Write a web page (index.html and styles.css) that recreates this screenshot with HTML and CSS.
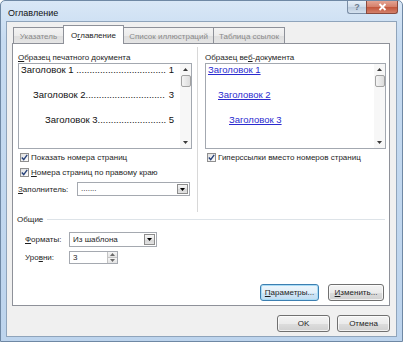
FILE: index.html
```html
<!DOCTYPE html>
<html lang="ru">
<head>
    <meta charset="UTF-8">
    <meta name="viewport" content="width=device-width, initial-scale=1.0">
    <title>Оглавление</title>
    <link rel="stylesheet" href="styles.css">
</head>
<body>
    <div class="window">
        <!-- заголовок окна -->
        <div class="titlebar">
            <span class="title">Оглавление</span>
            <div class="caption">
                <span class="cap-help">?</span>
                <span class="cap-close">
                    <svg width="11" height="8" viewBox="0 0 11 8"><path d="M2.5 1 L8.5 7 M8.5 1 L2.5 7" stroke="#fff" stroke-width="1.8"/></svg>
                </span>
            </div>
        </div>

        <div class="client">
            <!-- вкладки -->
            <div class="tabs">
                <span class="tab tab-index">Указатель</span>
                <span class="tab tab-toc active">О<u>г</u>лавление</span>
                <span class="tab tab-figures">Список иллюстраций</span>
                <span class="tab tab-refs">Таблица ссылок</span>
            </div>

            <div class="panel">
                <div class="columns">
                    <!-- печатный документ -->
                    <div class="col col-left">
                        <div class="caption-label"><u>О</u>бразец печатного документа</div>
                        <div class="preview preview-print">
                            <div class="preview-body">
                                <div class="entry lvl1"><span class="name">Заголовок 1 ..................................</span><span class="num">1</span></div>
                                <div class="entry lvl2"><span class="name">Заголовок 2..............................</span><span class="num">3</span></div>
                                <div class="entry lvl3"><span class="name">Заголовок 3..........................</span><span class="num">5</span></div>
                            </div>
                            <div class="sb">
                                <span class="sb-btn"><svg width="5" height="3" viewBox="0 0 5 3"><path d="M0 3 L2.5 0 L5 3 Z" fill="#3a3a3a"/></svg></span>
                                <span class="sb-thumb"></span>
                                <span class="sb-space"></span>
                                <span class="sb-btn"><svg width="5" height="3" viewBox="0 0 5 3"><path d="M0 0 L5 0 L2.5 3 Z" fill="#3a3a3a"/></svg></span>
                            </div>
                        </div>
                        <label class="check-row first">
                            <span class="box"><svg width="7" height="7" viewBox="0 0 7 7"><path d="M0.8 3.6 L2.7 5.6 L6.2 0.9" fill="none" stroke="#27427a" stroke-width="1.4"/></svg></span>
                            <span>Показать номера страниц</span>
                        </label>
                        <label class="check-row">
                            <span class="box"><svg width="7" height="7" viewBox="0 0 7 7"><path d="M0.8 3.6 L2.7 5.6 L6.2 0.9" fill="none" stroke="#27427a" stroke-width="1.4"/></svg></span>
                            <span><u>Н</u>омера страниц по правому краю</span>
                        </label>
                        <div class="fill-row">
                            <span class="fill-label"><u>З</u>аполнитель:</span>
                            <div class="dropdown dd-fill">
                                <span class="dd-text">.......</span>
                                <span class="dd-btn"><svg width="5" height="3" viewBox="0 0 5 3"><path d="M0 0 L5 0 L2.5 3 Z" fill="#000"/></svg></span>
                            </div>
                        </div>
                    </div>

                    <div class="vrule"></div>

                    <!-- веб-документ -->
                    <div class="col col-right">
                        <div class="caption-label">Образец ве<u>б</u>-документа</div>
                        <div class="preview preview-web">
                            <div class="preview-body">
                                <div class="entry web1"><a href="#">Заголовок 1</a></div>
                                <div class="entry web2"><a href="#">Заголовок 2</a></div>
                                <div class="entry web3"><a href="#">Заголовок 3</a></div>
                            </div>
                            <div class="sb">
                                <span class="sb-btn"><svg width="5" height="3" viewBox="0 0 5 3"><path d="M0 3 L2.5 0 L5 3 Z" fill="#3a3a3a"/></svg></span>
                                <span class="sb-thumb"></span>
                                <span class="sb-space"></span>
                                <span class="sb-btn"><svg width="5" height="3" viewBox="0 0 5 3"><path d="M0 0 L5 0 L2.5 3 Z" fill="#3a3a3a"/></svg></span>
                            </div>
                        </div>
                        <label class="check-row first">
                            <span class="box"><svg width="7" height="7" viewBox="0 0 7 7"><path d="M0.8 3.6 L2.7 5.6 L6.2 0.9" fill="none" stroke="#27427a" stroke-width="1.4"/></svg></span>
                            <span>Гиперссылки вместо номеров страниц</span>
                        </label>
                    </div>
                </div>

                <!-- общие -->
                <div class="group-head">
                    <span>Общие</span>
                    <span class="rule"></span>
                </div>
                <div class="field-row formats">
                    <span class="field-label"><u>Ф</u>орматы:</span>
                    <div class="dropdown dd-formats">
                        <span class="dd-text">Из шаблона</span>
                        <span class="dd-btn"><svg width="5" height="3" viewBox="0 0 5 3"><path d="M0 0 L5 0 L2.5 3 Z" fill="#000"/></svg></span>
                    </div>
                </div>
                <div class="field-row levels">
                    <span class="field-label">Уро<u>в</u>ни:</span>
                    <div class="spinner">
                        <span class="dd-text">3</span>
                        <span class="spin-btns">
                            <span class="spin"><svg width="5" height="3" viewBox="0 0 5 3"><path d="M0 3 L2.5 0 L5 3 Z" fill="#6a6a6a"/></svg></span>
                            <span class="spin"><svg width="5" height="3" viewBox="0 0 5 3"><path d="M0 0 L5 0 L2.5 3 Z" fill="#6a6a6a"/></svg></span>
                        </span>
                    </div>
                </div>

                <div class="actions">
                    <button class="btn btn-focus btn-params"><u>П</u>араметры...</button>
                    <button class="btn btn-edit"><u>И</u>зменить...</button>
                </div>
            </div>

            <div class="footer">
                <button class="btn btn-ok">OK</button>
                <button class="btn btn-cancel">Отмена</button>
            </div>
        </div>
    </div>
</body>
</html>
```

FILE: styles.css
```css
* {
    box-sizing: border-box;
}
body {
    margin: 0;
    font-family: "Liberation Sans", Arial, sans-serif;
    font-size: 8px;
    color: #1e1e1e;
    background: #fff;
}
u {
    text-decoration: underline;
    text-underline-offset: 1px;
}

/* окно */
.window {
    width: 403px;
    height: 342px;
    display: flex;
    flex-direction: column;
    padding: 0 5px 4px 5px;
    border: 1px solid #6f88a4;
    border-radius: 5px 5px 0 0;
    background: linear-gradient(#d9e7f6, #c6dbf1 40px, #bdd4ed);
}
.titlebar {
    height: 20px;
    display: flex;
    justify-content: space-between;
    align-items: flex-start;
}
.title {
    padding: 7px 0 0 2px;
    font-size: 9px;
    color: #111;
}
.caption {
    display: flex;
    margin-right: -1px;
}
.cap-help,
.cap-close {
    height: 13px;
    display: flex;
    align-items: center;
    justify-content: center;
    border: 1px solid #7b8ea6;
    border-top: none;
}
.cap-help {
    width: 19px;
    border-radius: 0 0 0 3px;
    border-right: none;
    background: linear-gradient(#e8f0f8, #cfdceb 50%, #bccbdc 51%, #d4e1ef);
    color: #6b7a8c;
    font-size: 9px;
    font-weight: bold;
}
.cap-close {
    width: 32px;
    border-radius: 0 0 3px 0;
    border-color: #8a4a3e;
    background: linear-gradient(#e4a493, #d47e69 50%, #c2553b 51%, #d3806a);
}

.client {
    flex: 1;
    display: flex;
    flex-direction: column;
    padding: 3px 6px 0 5px;
    border: 1px solid #8fa4bb;
    background: #f0f0f0;
}

/* вкладки */
.tabs {
    height: 19px;
    margin-bottom: -1px;
    padding-left: 1px;
    display: flex;
    align-items: flex-end;
}
.tab {
    height: 17px;
    margin-left: -1px;
    display: flex;
    align-items: center;
    justify-content: center;
    border: 1px solid #8e9199;
    border-bottom: none;
    background: linear-gradient(#f3f3f3, #ebebeb 50%, #dedede 51%, #e6e6e6);
    color: #8a8a8a;
}
.tab:first-child {
    margin-left: 0;
}
.tab.active {
    height: 19px;
    position: relative;
    z-index: 1;
    background: #fff;
    color: #1e1e1e;
}
.tab-index { width: 51px; }
.tab-toc { width: 61px; }
.tab-figures { width: 91px; }
.tab-refs { width: 72px; }

.panel {
    height: 263px;
    display: flex;
    flex-direction: column;
    border: 1px solid #8e9199;
    background: #fff;
}
.columns {
    height: 169px;
    display: flex;
}
.col-left {
    width: 184px;
    padding: 8px 0 0 5px;
}
.vrule {
    width: 1px;
    margin: 3px 0 1px;
    background: #d8d8d8;
}
.col-right {
    flex: 1;
    padding: 8px 0 0 7px;
}
.caption-label {
    height: 11px;
    line-height: 11px;
    white-space: nowrap;
}

/* образцы */
.preview {
    height: 86px;
    display: flex;
    border: 1px solid #a3a8b0;
    background: #fff;
}
.preview-print {
    width: 174px;
}
.preview-web {
    width: 181px;
}
.preview-body {
    flex: 1;
    min-width: 0;
    padding-right: 6px;
}
.entry {
    display: flex;
    justify-content: space-between;
    height: 12px;
    line-height: 12px;
    margin-bottom: 13px;
    font-size: 9.5px;
    color: #111;
    white-space: nowrap;
}
.lvl1 { padding-left: 2px; }
.lvl2 { padding-left: 14px; }
.lvl3 { padding-left: 26px; }
.web1 { padding-left: 2px; }
.web2 { padding-left: 12px; }
.web3 { padding-left: 23px; }
.entry a {
    color: #2b2bcf;
    text-decoration: underline;
}

.sb {
    width: 11px;
    display: flex;
    flex-direction: column;
    align-items: center;
    background: #f7f7f7;
}
.sb-btn {
    height: 11px;
    display: flex;
    align-items: center;
    justify-content: center;
}
.sb-thumb {
    width: 10px;
    height: 12px;
    border: 1px solid #a2a2a2;
    border-radius: 2px;
    background: linear-gradient(90deg, #f4f4f4, #dcdcdc);
}
.sb-space {
    flex: 1;
}

/* флажки */
.check-row {
    height: 9px;
    display: flex;
    align-items: center;
    margin-top: 6px;
    white-space: nowrap;
}
.check-row.first {
    margin-top: 4px;
}
.box {
    width: 9px;
    height: 9px;
    margin: 0 2px 0 2px;
    display: flex;
    align-items: center;
    justify-content: center;
    border: 1px solid #8f8f8f;
    background: linear-gradient(135deg, #e0e0e0, #fdfdfd);
}

.fill-row {
    display: flex;
    align-items: center;
    margin-top: 5px;
}
.fill-label {
    width: 59px;
}
.dropdown,
.spinner {
    display: flex;
    align-items: stretch;
    border: 1px solid #a5a9b0;
    background: #fff;
}
.dd-fill {
    width: 113px;
    height: 14px;
}
.dd-text {
    flex: 1;
    padding-left: 3px;
    line-height: 12px;
}
.dd-btn {
    width: 11px;
    margin: 1px;
    display: flex;
    align-items: center;
    justify-content: center;
    border: 1px solid #8d8d8d;
    background: linear-gradient(#f6f6f6, #e6e6e6 50%, #d6d6d6 51%, #e2e2e2);
}

/* общие */
.group-head {
    height: 11px;
    margin-top: 1px;
    padding: 0 4px;
    display: flex;
    align-items: center;
}
.group-head .rule {
    flex: 1;
    height: 1px;
    margin-left: 4px;
    background: #dde3e8;
}
.field-row {
    display: flex;
    align-items: center;
    padding-left: 12px;
}
.field-label {
    width: 44px;
}
.formats {
    margin-top: 7px;
}
.dd-formats {
    width: 88px;
    height: 15px;
}
.dd-formats .dd-text {
    line-height: 13px;
}
.levels {
    margin-top: 4px;
}
.spinner {
    width: 49px;
    height: 13px;
}
.spinner .dd-text {
    line-height: 11px;
}
.spin-btns {
    width: 10px;
    display: flex;
    flex-direction: column;
}
.spin {
    flex: 1;
    display: flex;
    align-items: center;
    justify-content: center;
    border-left: 1px solid #c4c4c4;
    background: linear-gradient(#f5f5f5, #e4e4e4);
}
.spin + .spin {
    border-top: 1px solid #c4c4c4;
}

/* кнопки */
.btn {
    height: 17px;
    padding: 0;
    border: 1px solid #707070;
    border-radius: 3px;
    background: linear-gradient(#f3f3f3, #ebebeb 50%, #dddddd 51%, #d0d0d0);
    font-family: inherit;
    font-size: 8px;
    color: #1e1e1e;
    box-shadow: inset 0 0 0 1px rgba(255, 255, 255, 0.7);
}
.btn-focus {
    border-color: #3c7fb1;
    background: linear-gradient(#eef6fc, #e1eff9 50%, #cfe5f5 51%, #c2ddf2);
    box-shadow: inset 0 0 0 1px #a9dcf6;
}
.actions {
    margin-top: 20px;
    padding-right: 5px;
    display: flex;
    justify-content: flex-end;
    gap: 9px;
}
.btn-params { width: 59px; }
.btn-edit { width: 56px; }

.footer {
    padding-top: 9px;
    display: flex;
    justify-content: flex-end;
    gap: 7px;
}
.btn-ok,
.btn-cancel {
    width: 53px;
}
```
